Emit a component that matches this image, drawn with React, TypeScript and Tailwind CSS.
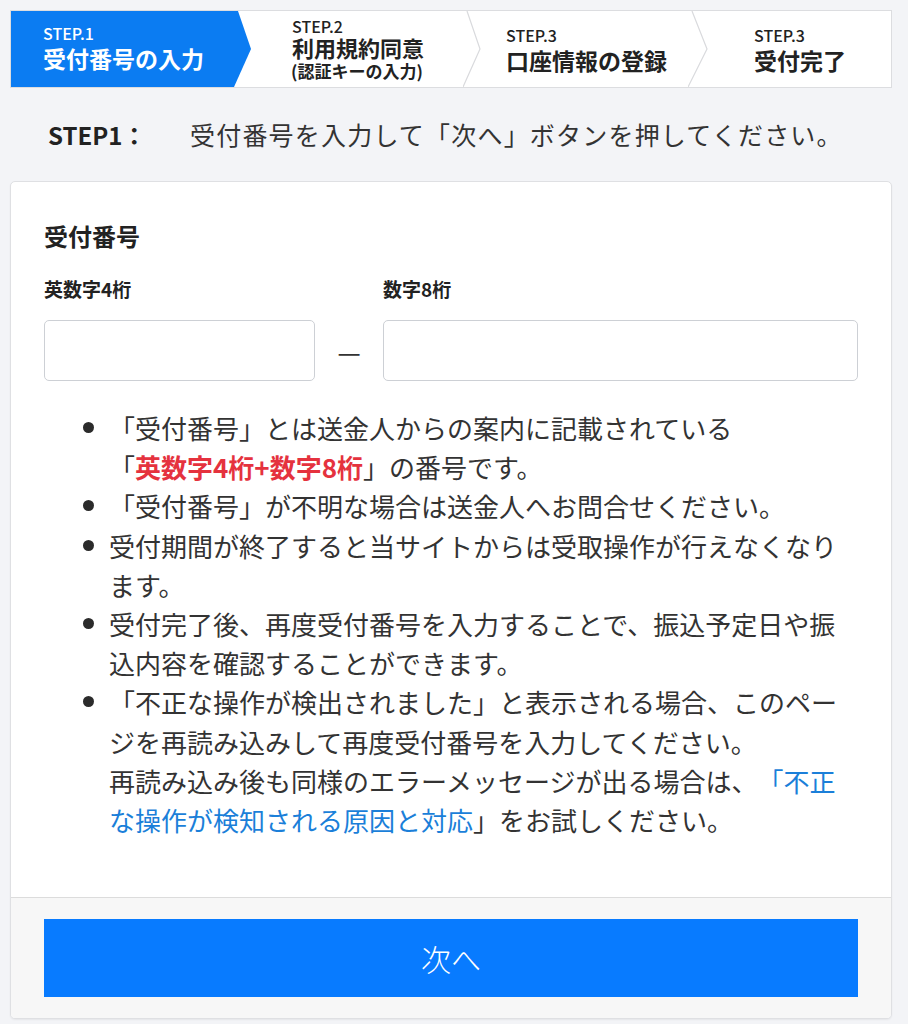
import React from "react";

const Chevron: React.FC<{ w: number; top: number }> = ({ w, top }) => (
  <svg
    className="absolute right-0 top-0 h-full"
    width={w}
    viewBox={`0 0 ${w} 76`}
    preserveAspectRatio="none"
  >
    <polyline
      points={`${top},0 ${w - 1},38 0,76`}
      fill="none"
      stroke="#d9dadd"
      strokeWidth="1.2"
    />
  </svg>
);

const Stepper: React.FC = () => (
  <nav className="flex h-[78px] border border-[#dcdde0] bg-white text-[#222]">
    <div className="flex w-[240px] shrink-0 items-center bg-[#0b7cf2] pl-[32px] text-white [clip-path:polygon(0_0,calc(100%_-_13px)_0,100%_50%,calc(100%_-_17px)_100%,0_100%)]">
      <div className="-mt-[2px]">
        <p className="text-[16px] leading-[19px] font-medium">STEP.1</p>
        <p className="text-[23px] leading-[30px] font-bold">受付番号の入力</p>
      </div>
    </div>
    <div className="relative flex w-[230px] shrink-0 items-center pl-[41px]">
      <div className="mt-[1px]">
        <p className="text-[16px] leading-[18px] font-medium">STEP.2</p>
        <p className="text-[22px] leading-[25px] font-bold">利用規約同意</p>
        <p className="-ml-[1px] text-[17px] leading-[22px] font-bold">(認証キーの入力)</p>
      </div>
      <Chevron w={18} top={4} />
    </div>
    <div className="relative flex w-[227px] shrink-0 items-center pl-[25px]">
      <div className="mt-[2px]">
        <p className="text-[16px] leading-[19px] font-medium">STEP.3</p>
        <p className="text-[23px] leading-[30px] font-bold">口座情報の登録</p>
      </div>
      <Chevron w={20} top={4} />
    </div>
    <div className="flex flex-1 items-center pl-[46px]">
      <div className="mt-[2px]">
        <p className="text-[16px] leading-[19px] font-medium">STEP.3</p>
        <p className="text-[23px] leading-[30px] font-bold">受付完了</p>
      </div>
    </div>
  </nav>
);

const Bullet: React.FC<{ children: React.ReactNode }> = ({ children }) => (
  <li className="flex">
    <span className="w-[30px] shrink-0 pt-[14px] pl-[4px]">
      <span className="block h-[11px] w-[11px] rounded-full bg-[#2b2b2b]" />
    </span>
    <p className="flex-1">{children}</p>
  </li>
);

export default function App() {
  return (
    <main className="min-h-screen bg-[#f3f4f7] pt-[10px] pl-[10px] font-['Noto_Sans_CJK_JP',sans-serif] text-[#333] [text-spacing-trim:space-all]">
      <div className="w-[882px]">
        <Stepper />

        <section className="flex h-[93px] items-center pl-[38px] text-[25px]">
          <p className="w-[142px] text-[24px] font-bold text-[#222]">STEP1：</p>
          <p className="tracking-[1.2px]">受付番号を入力して「次へ」ボタンを押してください。</p>
        </section>

        <section className="overflow-hidden rounded-[5px] border border-[#dfe0e3] bg-white shadow-[0_1px_2px_rgba(0,0,0,0.06)]">
          <div className="px-[33px] pt-[37px] pb-[58px]">
            <h2 className="text-[24px] leading-[34px] font-bold text-[#222]">受付番号</h2>
            <div className="mt-[22px] flex items-end">
              <div className="w-[271px] shrink-0">
                <p className="text-[19px] leading-[28px] font-bold text-[#222]">英数字4桁</p>
                <input className="mt-[17px] h-[61px] w-full rounded-[5px] border border-[#cdd0d5] bg-white px-3 text-[20px] outline-none" />
              </div>
              <div className="flex h-[61px] w-[68px] shrink-0 items-center justify-center text-[26px] text-[#333]">
                —
              </div>
              <div className="flex-1">
                <p className="text-[19px] leading-[28px] font-bold text-[#222]">数字8桁</p>
                <input className="mt-[17px] h-[61px] w-full rounded-[5px] border border-[#cdd0d5] bg-white px-3 text-[20px] outline-none" />
              </div>
            </div>

            <ul className="mt-[27px] ml-[35px] text-[26px] leading-[39.2px] text-[#333]">
              <Bullet>
                「受付番号」とは送金人からの案内に記載されている
                <br />「<span className="font-bold text-[#e5323e]">英数字4桁+数字8桁</span>」の番号です。
              </Bullet>
              <Bullet>「受付番号」が不明な場合は送金人へお問合せください。</Bullet>
              <Bullet>受付期間が終了すると当サイトからは受取操作が行えなくなります。</Bullet>
              <Bullet>受付完了後、再度受付番号を入力することで、振込予定日や振込内容を確認することができます。</Bullet>
              <Bullet>
                「不正な操作が検出されました」と表示される場合、このページを再読み込みして再度受付番号を入力してください。
                <br />
                再読み込み後も同様のエラーメッセージが出る場合は、
                <a className="text-[#1b7fd9]">「不正な操作が検知される原因と対応</a>」をお試しください。
              </Bullet>
            </ul>
          </div>

          <div className="border-t border-[#dcdcdc] bg-[#f7f7f7] px-[33px] pt-[21px] pb-[21px]">
            <button className="flex h-[78px] w-full items-center justify-center bg-[#087bff] text-[30px] font-light text-white">
              次へ
            </button>
          </div>
        </section>
      </div>
    </main>
  );
}
